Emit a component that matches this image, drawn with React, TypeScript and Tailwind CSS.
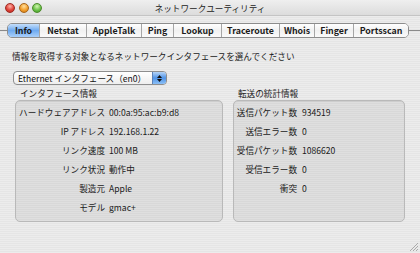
const tabs = [
  { label: "Info", w: "w-[31px]" },
  { label: "Netstat", w: "w-[47px]" },
  { label: "AppleTalk", w: "w-[55px]" },
  { label: "Ping", w: "w-[32px]" },
  { label: "Lookup", w: "w-[48px]" },
  { label: "Traceroute", w: "w-[58px]" },
  { label: "Whois", w: "w-[35px]" },
  { label: "Finger", w: "w-[39px]" },
  { label: "Portsscan", w: "w-[55px]" },
];

const ifaceRows = [
  ["ハードウェアアドレス", "00:0a:95:ac:b9:d8"],
  ["IP アドレス", "192.168.1.22"],
  ["リンク速度", "100 MB"],
  ["リンク状況", "動作中"],
  ["製造元", "Apple"],
  ["モデル", "gmac+"],
];

const statRows = [
  ["送信パケット数", "934519"],
  ["送信エラー数", "0"],
  ["受信パケット数", "1086620"],
  ["受信エラー数", "0"],
  ["衝突", "0"],
];

function TitleBar() {
  return (
    <div className="relative h-[16px] bg-gradient-to-b from-[#efefef] to-[#dcdcdc] border-b border-[#c4c4c4]">
      <div className="absolute left-[5px] top-[3px] flex gap-[3.5px]">
        <span className="w-[10px] h-[10px] rounded-full border border-[#9c2a22] bg-[radial-gradient(circle_at_50%_30%,#ffb3a8,#e0443a_55%,#b5231a)]" />
        <span className="w-[10px] h-[10px] rounded-full border border-[#a8661a] bg-[radial-gradient(circle_at_50%_30%,#ffe0a0,#f3a02c_55%,#c87414)]" />
        <span className="w-[10px] h-[10px] rounded-full border border-[#4c8b2a] bg-[radial-gradient(circle_at_50%_30%,#d2f5b0,#6cc24a_55%,#3f9324)]" />
      </div>
      <div className="text-center text-[8.6px] leading-[16px] text-[#222]">ネットワークユーティリティ</div>
    </div>
  );
}

function TabBar() {
  return (
    <div className="mt-[7px] flex items-center h-[15px]">
      <div className="w-[7px] h-px bg-[#8a8a8a]" />
      <div className="flex h-[15px] rounded-[5px] border border-[#8c8c8c] overflow-hidden">
        {tabs.map((t, i) => (
          <div
            key={t.label}
            className={`${t.w} flex items-center justify-center text-[8.8px] font-semibold text-[#1b1b1b] ${
              i === 0
                ? "bg-gradient-to-b from-[#c4defa] via-[#6eaaf0] to-[#a9d0fb]"
                : "bg-gradient-to-b from-[#ffffff] via-[#f1f1f1] to-[#fafafa]"
            } ${i > 0 ? "border-l border-[#a6a6a6]" : ""}`}
          >
            {t.label}
          </div>
        ))}
      </div>
      <div className="flex-1 h-px bg-[#8a8a8a]" />
    </div>
  );
}

function Popup() {
  return (
    <div className="mt-[9px] ml-[13px] w-[154px] h-[14px] flex rounded-[4px] border border-[#8e8e8e] overflow-hidden bg-gradient-to-b from-[#ffffff] to-[#eeeeee]">
      <div className="flex-1 pl-[4px] text-[8.6px] leading-[12px] text-[#111]">Ethernet インタフェース（en0）</div>
      <div className="w-[14px] flex flex-col items-center justify-center gap-[1px] bg-gradient-to-b from-[#b5d4f7] via-[#4f93e6] to-[#8cc0f6] border-l border-[#5b82b8]">
        <svg width="5" height="3" viewBox="0 0 5 3"><path d="M0 3 L2.5 0 L5 3 Z" fill="#111" /></svg>
        <svg width="5" height="3" viewBox="0 0 5 3"><path d="M0 0 L2.5 3 L5 0 Z" fill="#111" /></svg>
      </div>
    </div>
  );
}

function Group({
  title,
  rows,
  labelW,
  gap,
  className,
}: {
  title: string;
  rows: string[][];
  labelW: string;
  gap: string;
  className: string;
}) {
  return (
    <div className={className}>
      <div className="pl-[5px] h-[12px] text-[8.6px] leading-[12px] text-[#222]">{title}</div>
      <div className="mt-[1px] h-[122px] rounded-[5px] border border-[#b9b9b9] bg-black/[0.055] pt-[2px] shadow-[inset_0_1px_1px_rgba(0,0,0,0.06)]">
        {rows.map(([k, v]) => (
          <div key={k} className="flex h-[19px] items-center text-[8.6px] text-[#1a1a1a]">
            <span className={`${labelW} shrink-0 text-right whitespace-nowrap`}>{k}</span>
            <span className={gap}>{v}</span>
          </div>
        ))}
      </div>
    </div>
  );
}

function ResizeGrip() {
  return (
    <svg className="absolute right-[2px] bottom-[2px]" width="9" height="9" viewBox="0 0 9 9">
      <path d="M9 1 L1 9 M9 4 L4 9 M9 7 L7 9" stroke="#9a9a9a" strokeWidth="0.8" />
    </svg>
  );
}

export default function App() {
  return (
    <div
      className="relative w-[420px] h-[253px] overflow-hidden bg-[repeating-linear-gradient(180deg,#ececec_0px,#ececec_1px,#e5e5e5_1px,#e5e5e5_2px)]"
      style={{ fontFamily: '"Noto Sans CJK JP", sans-serif' }}
    >
      <TitleBar />
      <TabBar />
      <p className="mt-[12px] ml-[12px] h-[12px] text-[8.6px] leading-[12px] text-[#1a1a1a]">
        情報を取得する対象となるネットワークインタフェースを選んでください
      </p>
      <Popup />
      <div className="mt-[2px] flex">
        <Group
          title="インタフェース情報"
          rows={ifaceRows}
          labelW="w-[89px]"
          gap="ml-[4px]"
          className="ml-[15px] w-[208px]"
        />
        <Group
          title="転送の統計情報"
          rows={statRows}
          labelW="w-[63px]"
          gap="ml-[5px]"
          className="ml-[10px] w-[172px]"
        />
      </div>
      <ResizeGrip />
    </div>
  );
}
